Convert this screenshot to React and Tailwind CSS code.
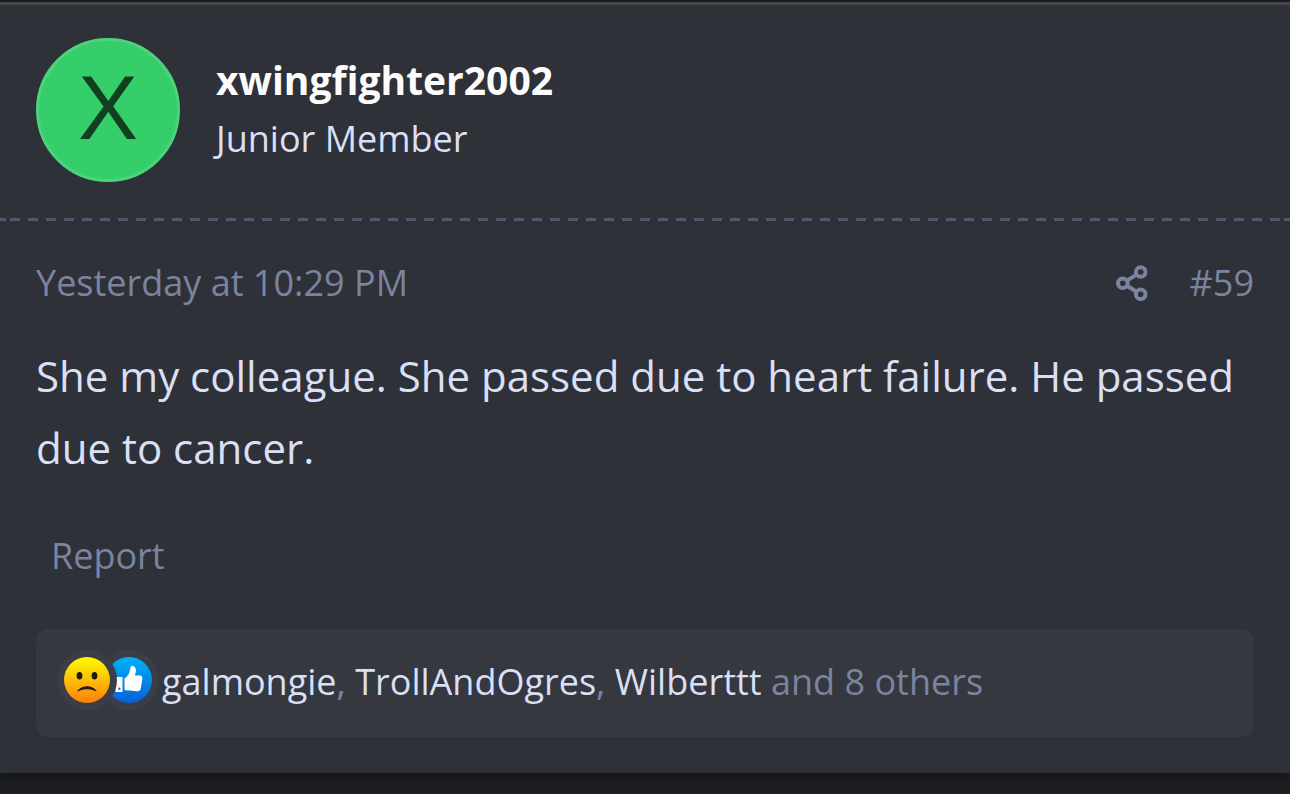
import React from 'react';

const reactors = ['galmongie', 'TrollAndOgres', 'Wilberttt'];

const ShareIcon = () => (
  <svg className="w-8 h-9" viewBox="0 0 32 36" fill="none" stroke="currentColor" strokeWidth="4" aria-hidden="true">
    <circle cx="24.7" cy="7" r="4.8" />
    <circle cx="6.8" cy="18.2" r="4.8" />
    <circle cx="24.7" cy="29.3" r="4.8" />
    <path d="M11 15.6l9.6-6M11 20.8l9.6 6" />
  </svg>
);

const SadIcon = () => (
  <svg className="w-full h-full" viewBox="0 0 46 46" role="img" aria-label="Sad">
    <defs>
      <linearGradient id="sad-face" x1="0" y1="0" x2="0" y2="1">
        <stop offset="0.1" stopColor="#fef200" />
        <stop offset="1" stopColor="#ff7d0a" />
      </linearGradient>
    </defs>
    <circle cx="23" cy="23" r="23" fill="url(#sad-face)" />
    <ellipse cx="15.5" cy="18.7" rx="2.9" ry="3.8" fill="#1c1a1c" />
    <ellipse cx="30.5" cy="18.7" rx="2.9" ry="3.8" fill="#1c1a1c" />
    <path d="M13.8 34c4-5.600 14.400-5.600 18.400 0-5.400-3-13-3-18.400 0z" fill="#1c1a1c" stroke="#1c1a1c" strokeLinejoin="round" />
  </svg>
);

const LikeIcon = () => (
  <svg className="w-full h-full" viewBox="0 0 46 46" role="img" aria-label="Like">
    <defs>
      <linearGradient id="like-disc" x1="0" y1="0" x2="0" y2="1">
        <stop offset="0" stopColor="#00b2f5" />
        <stop offset="1" stopColor="#0660d8" />
      </linearGradient>
    </defs>
    <circle cx="23" cy="23" r="23" fill="url(#like-disc)" />
    <path fillRule="evenodd" fill="#fff" d="M9.500 20h7v15h-7zM13.400 30.500a1.200 1.200 0 1 0 0 2.400 1.200 1.200 0 0 0 0-2.400z" />
    <path
      fill="#fff"
      d="M18.500 21.500c3-2 4.500-4.500 5.300-7.500.4-2 .6-4.500 2-4.900 2.200-.5 4.200 1.500 4.200 4.300 0 2-1 4-1.200 5.100h5c2 0 2.800 1.500 2.500 3.500l-1.500 9.500c-.3 2-1.700 2.800-3.500 2.700-4-.1-9-.3-12.800-1.200z"
    />
  </svg>
);

const App = () => {
  return (
    <div className="bg-[#1d1e22] pt-[2px] pb-[21px] font-['Open_Sans','Noto_Sans',sans-serif]">
      <article className="bg-[#2e3138] border-t-[3px] border-[#46474d] shadow-[0_3px_12px_rgba(0,0,0,0.4)] pb-9">
        <header className="flex items-center gap-9 px-9 pt-[33px] pb-9">
          <a
            href="#profile"
            className="w-36 h-36 shrink-0 rounded-full bg-[#36ce6a] border-[3px] border-[#4dd37b] flex items-center justify-center pb-1 font-['Liberation_Sans',sans-serif] text-[90px] leading-none text-[#104020]"
          >
            X
          </a>
          <div>
            <h4 className="mb-0.5 text-[39px] leading-[56px] font-bold">
              <a href="#profile" className="text-[#fcfcfc]">xwingfighter2002</a>
            </h4>
            <h5 className="text-[36px] leading-[58px] text-[#d9dff5]">Junior Member</h5>
          </div>
        </header>

        {/* Dashed divider, short dashes at both ends */}
        <div className="flex h-[3px]" aria-hidden="true">
          <span className="w-1.5 bg-[#4b586e]" />
          <span className="flex-1 mx-1 bg-[repeating-linear-gradient(90deg,#4b586e_0,#4b586e_10px,transparent_10px,transparent_18px)]" />
          <span className="w-1.5 bg-[#4b586e]" />
        </div>

        <div className="px-9">
          <div className="flex items-center justify-between pt-[35px] text-[36px] leading-[54px] text-[#7b849f]">
            <a href="#post-59">
              <time>Yesterday at 10:29 PM</time>
            </a>
            <div className="flex items-center gap-[42px]">
              <a href="#share" aria-label="Share">
                <ShareIcon />
              </a>
              <a href="#post-59">#59</a>
            </div>
          </div>

          <p className="mt-[30px] text-[42px] leading-[72px] text-[#d9dff5]">
            She my colleague. She passed due to heart failure. He passed due to cancer.
          </p>

          <div className="mt-[45px] px-[15px] text-[36px] leading-[54px] text-[#7b849f]">
            <a href="#report">Report</a>
          </div>

          <div className="mt-[46px] flex items-center rounded-xl bg-[#35383f] h-[108px] px-[21px] text-[36px] leading-[54px] text-[#7b849f]">
            <div className="flex shrink-0 pb-1.5">
              <span className="relative z-10 w-[60px] h-[60px] rounded-full bg-[#3b3e46] p-[7px]">
                <SadIcon />
              </span>
              <span className="-ml-[18px] w-[60px] h-[60px] rounded-full bg-[#3b3e46] p-[7px]">
                <LikeIcon />
              </span>
            </div>
            <p className="ml-[3px] pb-0.5">
              {reactors.map((name, i) => (
                <React.Fragment key={name}>
                  {i > 0 && ', '}
                  <a href="#reactions" className="text-[#d9dff5]">{name}</a>
                </React.Fragment>
              ))}{' '}
              <a href="#reactions">and 8 others</a>
            </p>
          </div>
        </div>
      </article>
    </div>
  );
};

export default App;
